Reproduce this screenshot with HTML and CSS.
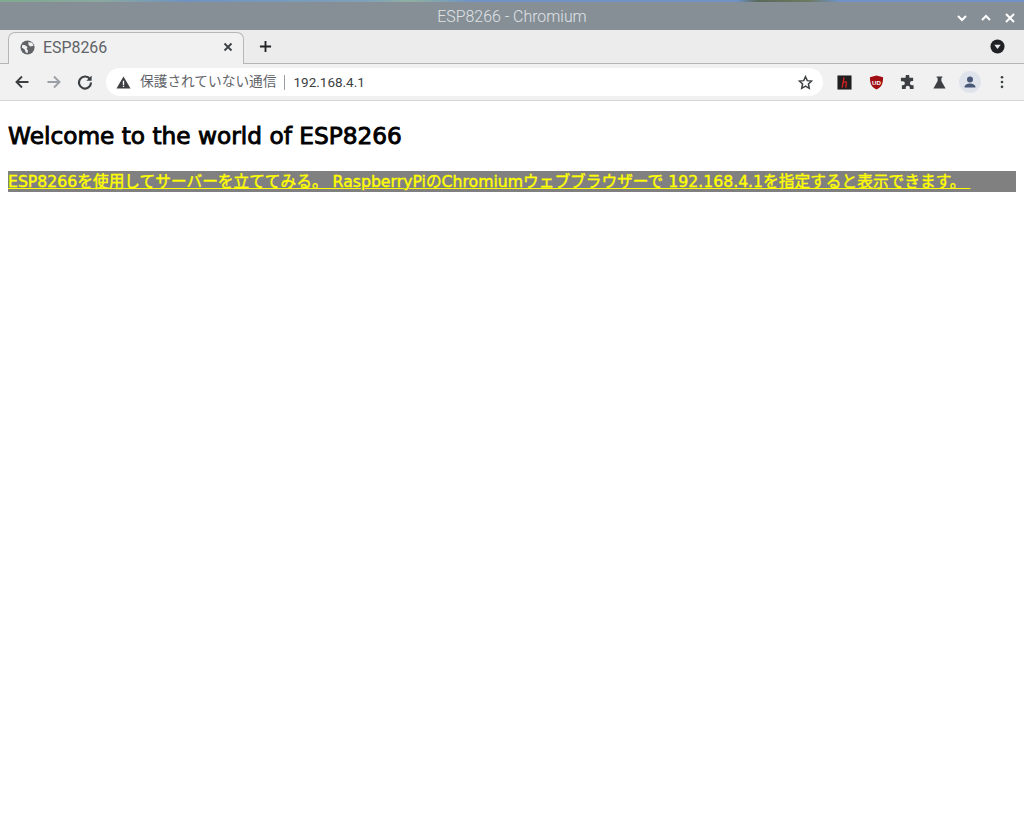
FILE: index.html
```html
<!DOCTYPE html>
<html lang="ja">
<head>
<meta charset="utf-8">
<title>ESP8266 - Chromium</title>
<link rel="stylesheet" href="styles.css">
</head>
<body>
<div class="wallpaper"></div>
<header class="titlebar">
  <span class="title">ESP8266 - Chromium</span>
  <div class="winbtns">
    <svg class="winbtn" viewBox="0 0 12 12"><path d="M2 4l4 4 4-4" /></svg>
    <svg class="winbtn" viewBox="0 0 12 12"><path d="M2 8l4-4 4 4" /></svg>
    <svg class="winbtn" viewBox="0 0 12 12"><path d="M2 2l8 8M10 2l-8 8" /></svg>
  </div>
</header>
<div class="tabstrip">
  <div class="tab">
    <svg class="favicon" viewBox="0 0 16 16"><circle cx="8" cy="8" r="7.500" fill="#5f6368"/><path d="M2.500 5l3 .5 2.500 2-1 2 1.500 1.500-.5 3-2-1-1-3-3-2zM9 2l4 1 1.500 3-3.500 1-2-2z" fill="#f1f1f1"/></svg>
    <span class="tabtitle">ESP8266</span>
    <svg class="tabclose" viewBox="0 0 10 10"><path d="M1.500 1.500l7 7M8.500 1.500l-7 7"/></svg>
  </div>
  <svg class="newtab" viewBox="0 0 14 14"><path d="M7 1v12M1 7h12"/></svg>
  <svg class="tabmenu" viewBox="0 0 16 16"><circle cx="8" cy="8" r="7.500" fill="#202124"/><path d="M4.600 6h6.800L8 10.600z" fill="#ececec"/></svg>
</div>
<nav class="toolbar">
  <svg class="navicon" viewBox="0 0 16 16"><path class="dark" d="M14.500 8H2.500M8 2.500L2.500 8 8 13.500"/></svg>
  <svg class="navicon" viewBox="0 0 16 16"><path class="dim" d="M1.500 8h12M8 2.500L13.500 8 8 13.500"/></svg>
  <svg class="navicon" viewBox="0 0 16 16"><path class="dark thick" d="M13 5.200A6 6 0 1 0 14 8.600"/><path d="M14.600 1.600v5.200H9.400z" fill="#3c4043"/></svg>
  <div class="omnibox">
    <svg class="warn" viewBox="0 0 16 16"><path d="M8 1.500L15.500 14.500H.5z" fill="#3c4043"/><path d="M7.300 6h1.400v4.600H7.300zM7.300 11.500h1.400v1.400H7.300z" fill="#fff"/></svg>
    <span class="insecure">保護されていない通信</span>
    <span class="sep"></span>
    <span class="url">192.168.4.1</span>
    <svg class="star" viewBox="0 0 16 16"><path d="M8 1.800l1.900 4.200 4.600.5-3.400 3.100.9 4.600L8 11.900l-4 2.300.9-4.600L1.500 6.500l4.600-.5z"/></svg>
  </div>
  <div class="extensions">
    <svg class="ext" viewBox="0 0 16 16"><rect x=".5" y=".5" width="15" height="15" fill="#1f1f1f"/><path d="M7.500 2.500L5.500 13.500M6.500 8.500C8 6.500 10.500 6.500 10 9l-.7 4.500" fill="none" stroke="#d0201f" stroke-width="1.500"/></svg>
    <svg class="ext" viewBox="0 0 16 16"><path d="M8 .5l7 2c0 7-1.500 10.500-7 13-5.500-2.500-7-6-7-13z" fill="#a00d12"/><text x="8" y="10.200" class="ublock">UD</text></svg>
    <svg class="ext" viewBox="0 0 16 16"><path d="M6 1.500a2 2 0 0 1 4 0V3h4v3.500h-1.200a2.200 2.200 0 0 0 0 4.400H14.500V15H10.500v-1.300a2.200 2.200 0 0 0-4.400 0V15H2v-4h1a2.200 2.200 0 0 0 0-4.400H1V3h5z" fill="#3c4043"/></svg>
    <svg class="ext" viewBox="0 0 16 16"><path d="M5 1.500h6v1.500h-1v3.500L14.500 14.500H1.500L6 6.500V3H5z" fill="#3c4043"/></svg>
    <svg class="avatar" viewBox="0 0 22 22"><circle cx="11" cy="11" r="11" fill="#dfe3ec"/><circle cx="11" cy="8.500" r="3" fill="#4a5878"/><path d="M5.500 16.500c0-3 3-4 5.500-4s5.500 1 5.500 4z" fill="#4a5878"/></svg>
    <svg class="dots" viewBox="0 0 4 16"><circle cx="2" cy="2.500" r="1.500"/><circle cx="2" cy="8" r="1.500"/><circle cx="2" cy="13.500" r="1.500"/></svg>
  </div>
</nav>
<main class="page">
  <h2 class="heading">Welcome to the world of ESP8266</h2>
  <h4 class="banner"><span class="link">ESP8266を使用してサーバーを立ててみる。 RaspberryPiのChromiumウェブブラウザーで 192.168.4.1を指定すると表示できます。 </span></h4>
</main>
</body>
</html>
```
FILE: styles.css
```css
html, body {
  margin: 0;
  padding: 0;
  background: #fff;
}
body {
  font-family: "Roboto", "Noto Sans CJK JP", sans-serif;
  height: 833px;
  overflow: hidden;
}
.wallpaper {
  height: 2px;
  background: linear-gradient(90deg, #7fa98f 0, #8aa8a0 10%, #6f93c0 18%, #7fa0b8 36%, #8fb0a0 40%, #6f93c4 46%, #6f93c4 72%, #5a6a5a 74%, #6b7a60 79%, #6f93c9 82%, #6f93c9 100%);
}
.titlebar {
  height: 28px;
  background: #878f96;
  display: flex;
  align-items: center;
  justify-content: center;
  position: relative;
}
.title {
  color: #dfe3e6;
  font-size: 15.900px;
  font-weight: 300;
}
.winbtns {
  position: absolute;
  right: 8px;
  top: 10px;
  display: flex;
  gap: 12px;
}
.winbtn {
  width: 12px;
  height: 12px;
  fill: none;
  stroke: #fff;
  stroke-width: 2;
}
.tabstrip {
  height: 33px;
  background: #ececec;
  border-bottom: 1px solid #b4b6b8;
  display: flex;
  align-items: flex-end;
  padding-left: 8px;
}
.tab {
  width: 236px;
  height: 32px;
  background: #f1f1f1;
  border: 1px solid #b4b6b8;
  border-bottom: 0;
  border-radius: 7px 7px 0 0;
  display: flex;
  align-items: center;
  padding: 0 10px 3px 11px;
  margin-bottom: -1px;
  box-sizing: border-box;
}
.favicon {
  width: 15px;
  height: 15px;
  flex: none;
}
.tabtitle {
  margin-left: 8px;
  flex: 1;
  color: #5f6368;
  font-size: 15.900px;
}
.tabclose {
  width: 10px;
  height: 10px;
  fill: none;
  stroke: #3c4043;
  stroke-width: 1.800;
}
.newtab {
  width: 13px;
  height: 13px;
  margin: 0 0 10px 15px;
  fill: none;
  stroke: #202124;
  stroke-width: 2;
}
.tabmenu {
  width: 15px;
  height: 15px;
  margin: 0 19px 9px auto;
}
.toolbar {
  height: 36px;
  background: #f1f1f1;
  border-bottom: 1px solid #d4d4d4;
  display: flex;
  align-items: center;
  padding-left: 14px;
}
.navicon {
  width: 16px;
  height: 16px;
  margin-right: 15.500px;
  flex: none;
  fill: none;
}
.navicon path {
  stroke-width: 1.900;
  stroke: #3c4043;
}
.navicon .dim {
  stroke: #9aa0a6;
}
.navicon .thick {
  stroke-width: 2.200;
}
.navicon path[fill] {
  stroke: none;
}
.omnibox {
  width: 717px;
  height: 28px;
  margin-left: -2.500px;
  background: #fff;
  border-radius: 14px;
  display: flex;
  align-items: center;
  padding: 0 10px;
  box-sizing: border-box;
  flex: none;
}
.warn {
  width: 15px;
  height: 15px;
  flex: none;
}
.insecure {
  margin-left: 9px;
  color: #5f6368;
  font-size: 13.700px;
  line-height: 1;
}
.sep {
  width: 1px;
  height: 15px;
  background: #9aa0a6;
  margin: 0 8px 0 8px;
}
.url {
  color: #3c4043;
  font-size: 13.500px;
  flex: 1;
}
.star {
  width: 15px;
  height: 15px;
  fill: none;
  stroke: #3c4043;
  stroke-width: 1.600;
}
.extensions {
  display: flex;
  align-items: center;
  margin-left: 14px;
  gap: 16.500px;
}
.ext {
  width: 15px;
  height: 15px;
  flex: none;
}
.ublock {
  font-family: "Liberation Sans", sans-serif;
  font-size: 6.500px;
  font-weight: 700;
  fill: #fff;
  text-anchor: middle;
}
.avatar {
  width: 22px;
  height: 22px;
  margin: 0 -3px 0 -4px;
  flex: none;
}
.dots {
  width: 4px;
  height: 14px;
  fill: #3c4043;
  flex: none;
  margin-left: 5px;
}
.page {
  padding: 0 8px;
}
.heading {
  margin: 0;
  padding-top: 21px;
  font-family: "DejaVu Sans", "Noto Sans CJK JP", sans-serif;
  font-size: 23.250px;
  line-height: 28px;
  font-weight: 400;
  -webkit-text-stroke: .9px #000;
  color: #000;
}
.banner {
  margin: 21px 0 0;
  padding-top: 1px;
  background: #808080;
  font-family: "DejaVu Sans", "Noto Sans CJK JP", sans-serif;
  font-size: 15.700px;
  line-height: 19.500px;
  font-weight: 400;
  -webkit-text-stroke: .4px #ff0;
  color: #ff0;
}
.link {
  text-decoration: underline;
  white-space: pre;
}
```
